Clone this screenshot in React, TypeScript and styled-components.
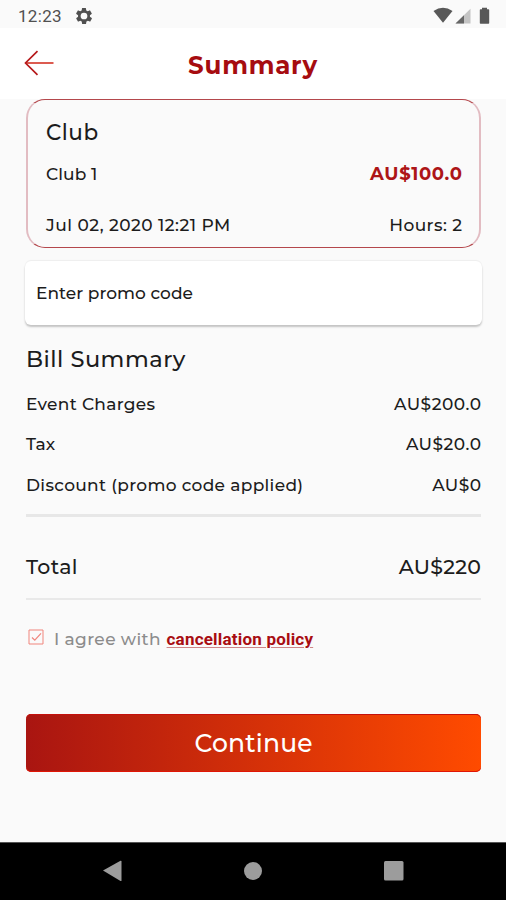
import React from "react";
import styled, { createGlobalStyle } from "styled-components";

const GlobalStyle = createGlobalStyle`
  * { box-sizing: border-box; }
  body { margin: 0; background: #fafafa; }
`;

const Screen = styled.div`
  width: 506px;
  height: 900px;
  display: flex;
  flex-direction: column;
  overflow: hidden;
  background: #fafafa;
  color: #1c1c1c;
  font-family: Montserrat, Inter, sans-serif;
`;

const StatusBar = styled.header`
  height: 28px;
  flex: none;
  display: flex;
  align-items: center;
  padding: 3px 15px 0 18px;
  svg { display: block; }
`;

const Clock = styled.span`
  font: 400 17px/20px Roboto, sans-serif;
  letter-spacing: 0.3px;
  color: #505050;
  width: 58px;
`;

const StatusIcons = styled.div`
  margin-left: auto;
  display: flex;
`;

const AppBar = styled.div`
  height: 71px;
  flex: none;
  display: grid;
  grid-template-columns: 60px 1fr 60px;
  align-items: center;
  background: #fff;
`;

const BackButton = styled.button`
  border: 0;
  padding: 0 0 1px 24px;
  background: none;
  svg { display: block; }
`;

const Title = styled.h1`
  margin: 2px 0 0;
  text-align: center;
  font-size: 24.5px;
  font-weight: 700;
  line-height: 28px;
  letter-spacing: 0.8px;
  color: #a60c10;
`;

interface TypeProps {
  $size?: number;
  $weight?: number;
  $track?: number;
  $color?: string;
}

const Text = styled.span<TypeProps>`
  white-space: nowrap;
  font-size: ${(p) => p.$size ?? 17}px;
  font-weight: ${(p) => p.$weight ?? 500};
  line-height: 24px;
  letter-spacing: ${(p) => p.$track ?? 0.3}px;
  margin-right: -${(p) => p.$track ?? 0.3}px;
  color: ${(p) => p.$color ?? "inherit"};
`;

const Content = styled.main`
  flex: 1;
  display: flex;
  flex-direction: column;
  padding: 0 25px 0 26px;
`;

const BookingCard = styled.section`
  height: 149px;
  border: 1px solid #b4474c;
  border-left: 2px solid #e2bcc2;
  border-right: 2px solid #e2bcc2;
  border-radius: 19px;
  padding: 20px 17px 0 18px;
`;

const Row = styled.div<{ $gap?: number }>`
  display: flex;
  flex: none;
  justify-content: space-between;
  height: 24px;
  margin-top: ${(p) => p.$gap ?? 0}px;
`;

const PromoField = styled.div`
  height: 64px;
  margin: 13px -1px 0 -1px;
  padding: 0 11px;
  display: flex;
  align-items: center;
  background: #fff;
  border-radius: 6px;
  box-shadow: 0 2px 2px rgba(0, 0, 0, 0.22), 0 -1px 1px rgba(0, 0, 0, 0.05);
`;

const Divider = styled.hr<{ $thick?: boolean; $gap: number }>`
  width: 100%;
  flex: none;
  border: 0;
  height: ${(p) => (p.$thick ? 3 : 2)}px;
  background: ${(p) => (p.$thick ? "#e7e7e7" : "#e9e9e9")};
  margin: ${(p) => p.$gap}px 0 0;
`;

const Agreement = styled.label`
  display: flex;
  height: 24px;
  margin-top: 27px;
  svg { flex: none; margin: 2px 10px 0 2px; }
`;

const PolicyLink = styled.a`
  margin-left: 6px;
  font: 700 17px/25px Roboto, sans-serif;
  letter-spacing: 0.2px;
  color: #a80d12;
  white-space: nowrap;
  text-decoration: underline;
  text-decoration-color: #cf8587;
  text-decoration-thickness: 1px;
  text-underline-offset: 2px;
`;

const ContinueButton = styled.button`
  height: 58px;
  flex: none;
  margin-top: 63px;
  border: 0;
  border-radius: 5px;
  color: #fff;
  font-family: inherit;
  background: linear-gradient(90deg, #a91511 0%, #ff4b00 100%);
  box-shadow: inset 0 1px #c4100c, inset 0 -1px #e01505;
`;

const NavBar = styled.nav`
  height: 58px;
  flex: none;
  display: flex;
  justify-content: space-between;
  align-items: center;
  padding: 0 102px 2px;
  background: #000;
  border-top: 1px solid #555;
  svg { display: block; }
`;

const charges = [
  { label: "Event Charges", amount: "AU$200.0", track: 0.3, amountTrack: 0.52, gap: 21 },
  { label: "Tax", amount: "AU$20.0", track: 0, amountTrack: 0.5, gap: 16 },
  { label: "Discount (promo code applied)", amount: "AU$0", track: 0.32, amountTrack: 0.4, gap: 17 },
];

export default function App() {
  return (
    <Screen>
      <GlobalStyle />
      <StatusBar>
        <Clock>12:23</Clock>
        <svg width="16" height="16" viewBox="2 2 20 20">
          <path fill="#505050" fillRule="evenodd" d="M19.4 13a7.500 7.500 0 0 0 0-2l2.100-1.600c.2-.2.300-.5.100-.700l-2-3.500c-.1-.2-.4-.3-.6-.2l-2.500 1a7.300 7.300 0 0 0-1.700-1l-.4-2.600A.5.5 0 0 0 14 2h-4a.5.5 0 0 0-.5.4L9.100 5a7.700 7.700 0 0 0-1.700 1l-2.500-1c-.2-.1-.5 0-.6.2l-2 3.500c-.1.200-.1.500.1.700L4.600 11a7.500 7.500 0 0 0 0 2l-2.100 1.600c-.2.200-.3.500-.1.700l2 3.500c.1.200.4.300.6.200l2.500-1c.5.400 1.100.700 1.700 1l.4 2.600c0 .2.200.400.5.400h4c.2 0 .4-.2.500-.4l.4-2.600a7.300 7.300 0 0 0 1.700-1l2.500 1c.2.100.5 0 .6-.2l2-3.500c.1-.2.100-.5-.1-.7zM12 7.800a4.200 4.200 0 1 1 0 8.400 4.200 4.200 0 0 1 0-8.400z" />
        </svg>
        <StatusIcons>
          <svg width="58" height="18" viewBox="433 6 58 18">
            <path fill="#585858" d="M433.500 10Q443 3.500 452.500 10L443 21.800Z" />
            <path fill="#c4c4c4" d="M470.500 7.800V22.500H455.500Z" />
            <path fill="#666" d="M464 14.200V22.500H455.500Z" />
            <path fill="#585858" d="M482 6.800h5v1.500h1.500q.7 0 .7.700V22.000q0 .8-.7.800h-8q-.7 0-.7-.8V9q0-.7.700-.7H482Z" />
          </svg>
        </StatusIcons>
      </StatusBar>

      <AppBar>
        <BackButton aria-label="Back">
          <svg width="30" height="26" viewBox="0 0 30 26" fill="none">
            <path d="M2 13H29.500" stroke="#dc5b50" strokeWidth="2" />
            <path d="M13.500 1.200L1.500 13L13.500 24.800" stroke="#b6191b" strokeWidth="1.700" />
          </svg>
        </BackButton>
        <Title>Summary</Title>
      </AppBar>

      <Content>
        <BookingCard>
          <Row>
            <Text $size={21.5} $track={0.5}>Club</Text>
          </Row>
          <Row $gap={18}>
            <Text $track={0.1}>Club 1</Text>
            <Text $size={18} $weight={700} $track={0.72} $color="#ad1517">AU$100.0</Text>
          </Row>
          <Row $gap={27}>
            <Text $track={0.47}>Jul 02, 2020 12:21 PM</Text>
            <Text $track={0.43}>Hours: 2</Text>
          </Row>
        </BookingCard>

        <PromoField>
          <Text $track={0.03}>Enter promo code</Text>
        </PromoField>

        <Row $gap={22}>
          <Text $size={22.5} $track={0.5}>Bill Summary</Text>
        </Row>
        {charges.map((c) => (
          <Row key={c.label} $gap={c.gap}>
            <Text $track={c.track}>{c.label}</Text>
            <Text $track={c.amountTrack}>{c.amount}</Text>
          </Row>
        ))}
        <Divider $thick $gap={17} />
        <Row $gap={38}>
          <Text $size={20.5} $track={0.4}>Total</Text>
          <Text $size={20.5} $track={0.3}>AU$220</Text>
        </Row>
        <Divider $gap={19} />

        <Agreement>
          <svg width="16" height="16" viewBox="0 0 16 16" fill="none" stroke="#f0857d">
            <path d="M1 1H15V15H1Z" />
            <path d="M4 8.500L6.800 11.200L13 4.300" strokeWidth="1.200" />
          </svg>
          <Text $track={0.37} $color="#8c8c8c">I agree with</Text>
          <PolicyLink>cancellation policy</PolicyLink>
        </Agreement>

        <ContinueButton>
          <Text $size={25} $weight={550} $track={0.2}>Continue</Text>
        </ContinueButton>
      </Content>

      <NavBar>
        <svg width="20" height="22" viewBox="0 0 20 22"><path fill="#9c9c9c" d="M1 10.500L18.500 .8Q19.500 .5 19.500 1.500V20.500Q19.500 21.300 18.500 21Z" /></svg>
        <svg width="18" height="18" viewBox="0 0 18 18"><circle cx="9" cy="9" r="9" fill="#9c9c9c" /></svg>
        <svg width="20" height="20" viewBox="0 0 20 20"><rect width="19.500" height="19.500" rx="1.500" fill="#9c9c9c" /></svg>
      </NavBar>
    </Screen>
  );
}
